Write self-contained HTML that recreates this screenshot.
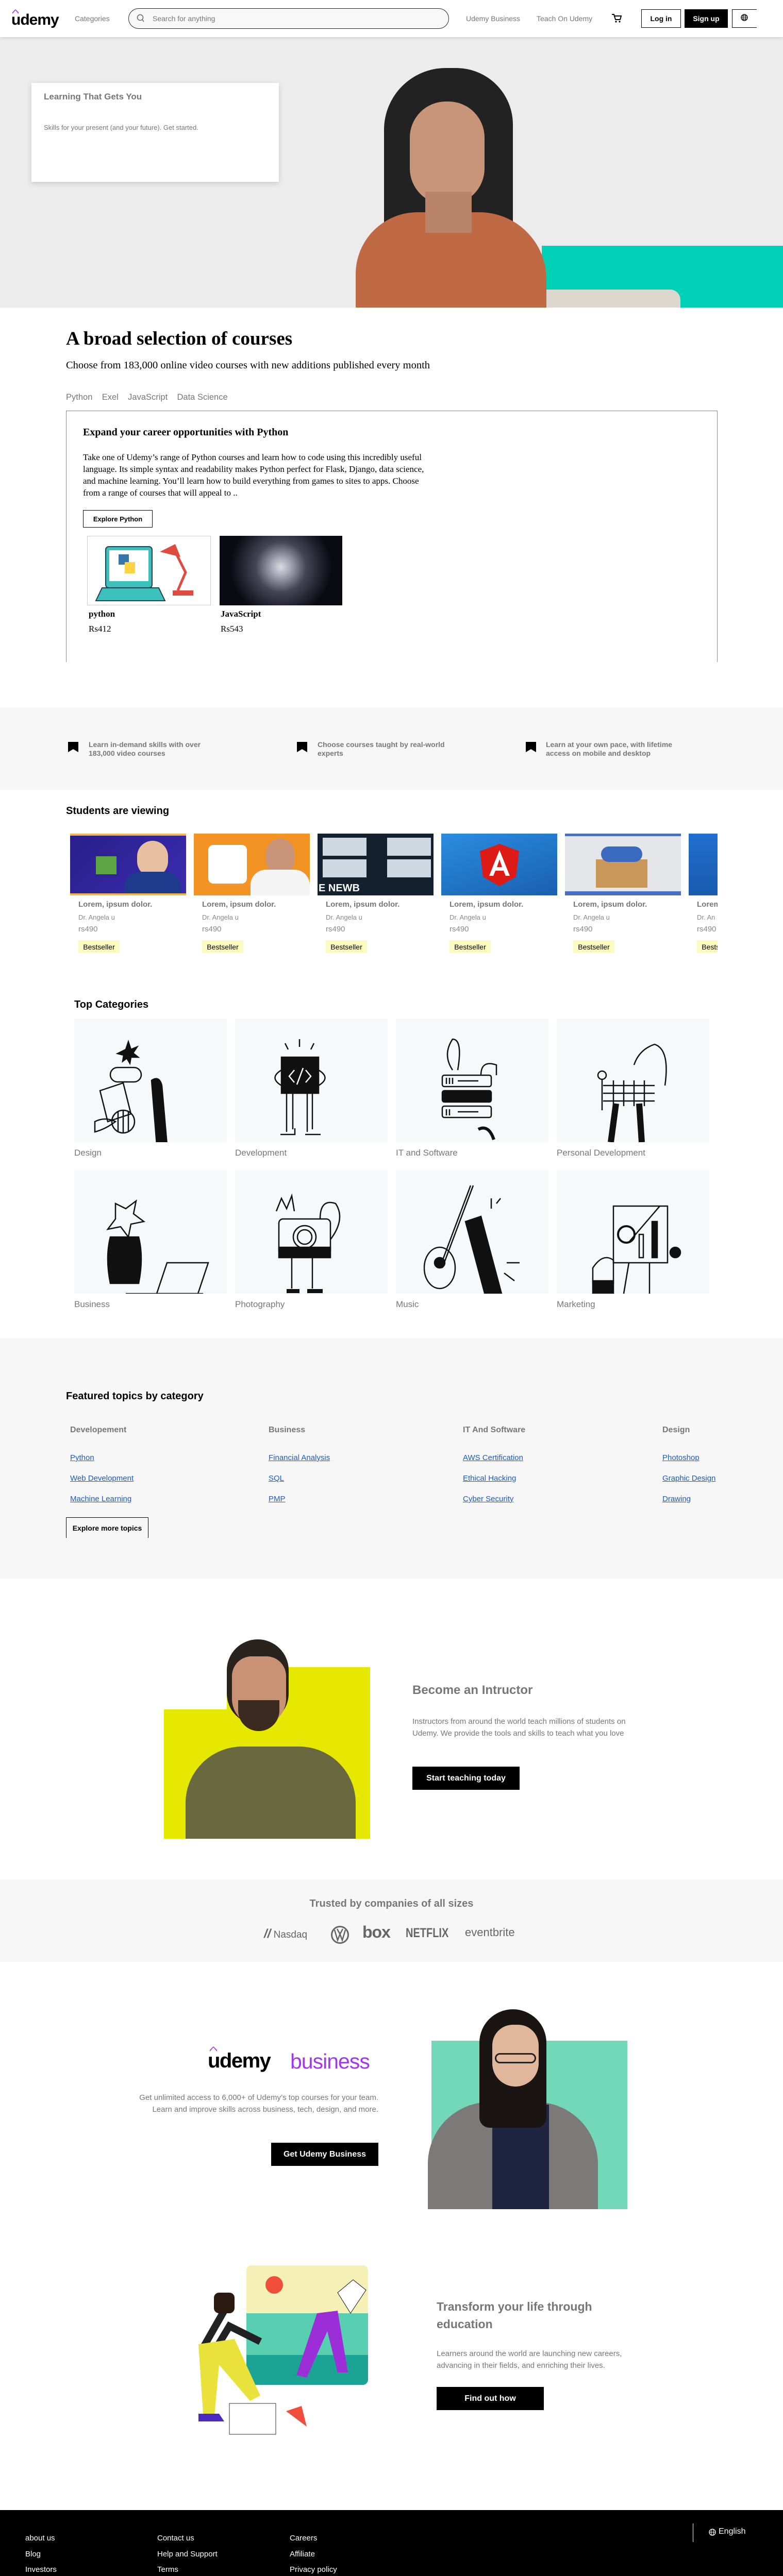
<!DOCTYPE html>
<html style="overflow:hidden;height:5134px"><head><meta charset="utf-8">
<style>
*{box-sizing:border-box;margin:0;padding:0}
html,body{width:1519px;height:5134px;overflow:hidden}
body{position:relative;font-family:"Liberation Sans",sans-serif;background:#fff;color:#000}
.a{position:absolute}
.serif{font-family:"Liberation Serif",serif}
.gray{color:#777}
.lnk{color:#1a5ac9;text-decoration:underline;font-size:15px}
.btn{position:absolute;background:#000;color:#fff;font-weight:bold;font-size:16px;display:flex;align-items:center;justify-content:center}
.tile{position:absolute;background:#f7f8fa;width:296px;height:240px}
.lbl{position:absolute;font-size:17px;color:#777}
.ci{position:absolute;width:225px;height:120px;top:1618px;overflow:hidden}
.ct{position:absolute;font-size:15px;font-weight:bold;color:#777;top:1747px}
.ca{position:absolute;font-size:13px;color:#888;top:1773px}
.cp{position:absolute;font-size:15px;color:#888;top:1795px}
.cb{position:absolute;top:1825px;height:25px;width:80px;background:#fefbc0;font-size:14px;display:flex;align-items:center;justify-content:center}
.ft{position:absolute;color:#fff;font-size:15px}
</style></head><body>

<!-- NAV -->
<div class="a" style="left:0;top:0;width:1519px;height:72px;background:#fff;box-shadow:0 2px 6px rgba(0,0,0,.12);z-index:2">
  <div class="a" style="left:24px;top:14px;width:10px;height:8px"><svg width="12" height="9"><path d="M0 9 L6 2 L12 9 L12 6 L6 0 L0 6Z" fill="#a435f0"/></svg></div>
  <div class="a" style="left:22px;top:22px;font-size:30px;font-weight:bold;letter-spacing:-1px">udemy</div>
  <div class="a gray" style="left:145px;top:28px;font-size:14px">Categories</div>
  <div class="a" style="left:249px;top:16px;width:622px;height:40px;border:1px solid #222;border-radius:20px;background:#f8f8f8"></div>
  <svg class="a" style="left:265px;top:27px" width="16" height="18"><circle cx="7" cy="7" r="5.5" fill="none" stroke="#666" stroke-width="1.5"/><path d="M11 11 L14 15" stroke="#666" stroke-width="1.5"/></svg>
  <div class="a gray" style="left:296px;top:28px;font-size:14px">Search for anything</div>
  <div class="a gray" style="left:904px;top:28px;font-size:14px">Udemy Business</div>
  <div class="a gray" style="left:1041px;top:28px;font-size:14px">Teach On Udemy</div>
  <svg class="a" style="left:1186px;top:26px" width="22" height="20"><path d="M1 2 H5 L8 12 H17 L19 5 H6" fill="none" stroke="#000" stroke-width="2"/><circle cx="9" cy="16" r="1.6"/><circle cx="16" cy="16" r="1.6"/></svg>
  <div class="a" style="left:1244px;top:18px;width:77px;height:36px;border:1px solid #000;font-weight:bold;font-size:14px;display:flex;align-items:center;justify-content:center">Log in</div>
  <div class="a" style="left:1328px;top:18px;width:84px;height:36px;background:#000;color:#fff;font-weight:bold;font-size:14px;display:flex;align-items:center;justify-content:center">Sign up</div>
  <div class="a" style="left:1420px;top:18px;width:48px;height:36px;border:1px solid #000;border-right:none"></div>
  <svg class="a" style="left:1437px;top:27px" width="14" height="14"><circle cx="7" cy="7" r="6" fill="none" stroke="#000" stroke-width="1.3"/><ellipse cx="7" cy="7" rx="2.5" ry="6" fill="none" stroke="#000"/><path d="M1 7H13M2 4H12M2 10H12" stroke="#000"/></svg>
</div>

<!-- HERO -->
<div class="a" style="left:0;top:72px;width:1519px;height:525px;background:#ececec;overflow:hidden">
  <div class="a" style="left:1051px;top:405px;width:468px;height:120px;background:#00d1b6"></div>
  <div class="a" style="left:1020px;top:490px;width:300px;height:40px;background:#ddd8cf;border-radius:20px 20px 0 0"></div>
  <div class="a" style="left:745px;top:60px;width:250px;height:440px;background:#222;border-radius:120px 110px 40px 40px"></div>
  <div class="a" style="left:690px;top:340px;width:370px;height:260px;background:#c06a45;border-radius:120px 130px 0 0"></div>
  <div class="a" style="left:795px;top:125px;width:145px;height:200px;background:#c99579;border-radius:70px"></div>
  <div class="a" style="left:825px;top:300px;width:90px;height:80px;background:#b9836a"></div>
  <div class="a" style="left:61px;top:89px;width:480px;height:192px;background:#fff;box-shadow:0 3px 10px rgba(0,0,0,.15)"></div>
  <div class="a" style="left:85px;top:106px;font-size:17px;font-weight:bold;color:#777">Learning That Gets You</div>
  <div class="a" style="left:85px;top:168px;font-size:13px;color:#777">Skills for your present (and your future). Get started.</div>
</div>

<!-- BROAD -->
<div class="a serif" style="left:128px;top:636px;font-size:37px;font-weight:bold">A broad selection of courses</div>
<div class="a serif" style="left:128px;top:698px;font-size:20.5px">Choose from 183,000 online video courses with new additions published every month</div>
<div class="a gray" style="left:128px;top:762px;font-size:16.5px">Python&nbsp;&nbsp;&nbsp;&nbsp;Exel&nbsp;&nbsp;&nbsp;&nbsp;JavaScript&nbsp;&nbsp;&nbsp;&nbsp;Data Science</div>
<div class="a" style="left:128px;top:797px;width:1264px;height:488px;border:1px solid #888;border-bottom:none"></div>
<div class="a serif" style="left:161px;top:828px;font-size:20px;font-weight:bold">Expand your career opportunities with Python</div>
<div class="a serif" style="left:161px;top:876px;width:680px;font-size:17px;line-height:23px">Take one of Udemy’s range of Python courses and learn how to code using this incredibly useful language. Its simple syntax and readability makes Python perfect for Flask, Django, data science, and machine learning. You’ll learn how to build everything from games to sites to apps. Choose from a range of courses that will appeal to ..</div>
<div class="a" style="left:161px;top:990px;width:135px;height:34px;border:1px solid #000;font-size:13px;font-weight:bold;display:flex;align-items:center;justify-content:center">Explore Python</div>
<div class="a" style="left:169px;top:1040px;width:240px;height:135px;border:1px solid #ccc;background:#fff">
  <svg width="238" height="133"><rect x="35" y="20" width="90" height="80" rx="6" fill="#3cc0bb" stroke="#2c3e50" stroke-width="2"/><rect x="42" y="27" width="76" height="60" fill="#fff"/><path d="M60 35h20v20h-20z" fill="#3776ab"/><path d="M72 50h20v22h-20z" fill="#ffd343"/><path d="M28 100 h110 l12 25 h-134z" fill="#3cc0bb" stroke="#2c3e50" stroke-width="2"/><path d="M140 30 l30 -15 l10 25 z" fill="#e04b3f"/><path d="M170 30 l20 40 l-15 35" stroke="#e04b3f" stroke-width="5" fill="none"/><rect x="165" y="105" width="40" height="10" fill="#e04b3f"/></svg>
</div>
<div class="a" style="left:426px;top:1040px;width:238px;height:135px;background:radial-gradient(circle at 50% 45%,#ddd 0,#aab 12%,#445 35%,#0a0a12 70%)"></div>
<div class="a serif" style="left:172px;top:1182px;font-size:17px;font-weight:bold">python</div>
<div class="a serif" style="left:172px;top:1211px;font-size:17px">Rs412</div>
<div class="a serif" style="left:428px;top:1182px;font-size:17px;font-weight:bold">JavaScript</div>
<div class="a serif" style="left:428px;top:1211px;font-size:17px">Rs543</div>

<!-- FEATURES -->
<div class="a" style="left:0;top:1373px;width:1519px;height:160px;background:#f7f7f7"></div>
<svg class="a" style="left:132px;top:1440px" width="20" height="20"><path d="M0 0H20V20L10 14L0 20Z"/></svg>
<svg class="a" style="left:576px;top:1440px" width="20" height="20"><path d="M0 0H20V20L10 14L0 20Z"/></svg>
<svg class="a" style="left:1020px;top:1440px" width="20" height="20"><path d="M0 0H20V20L10 14L0 20Z"/></svg>
<div class="a" style="left:172px;top:1437px;font-size:14px;font-weight:bold;color:#777;line-height:17px">Learn in-demand skills with over<br>183,000 video courses</div>
<div class="a" style="left:616px;top:1437px;font-size:14px;font-weight:bold;color:#777;line-height:17px">Choose courses taught by real-world<br>experts</div>
<div class="a" style="left:1059px;top:1437px;font-size:14px;font-weight:bold;color:#777;line-height:17px">Learn at your own pace, with lifetime<br>access on mobile and desktop</div>

<!-- STUDENTS -->
<div class="a" style="left:128px;top:1563px;font-size:20px;font-weight:bold">Students are viewing</div>
<div class="ci" style="left:136px;background:linear-gradient(135deg,#2a1e8a,#3b2bb0);border-top:4px solid #f0b84a;border-bottom:4px solid #f0b84a"><div class="a" style="left:130px;top:10px;width:60px;height:70px;border-radius:30px;background:#e8c0a0"></div><div class="a" style="left:105px;top:70px;width:110px;height:50px;background:#1f3a8a;border-radius:30px 30px 0 0"></div><div class="a" style="left:50px;top:40px;width:40px;height:35px;background:#5da545"></div></div>
<div class="ci" style="left:376px;background:#f39323"><div class="a" style="left:28px;top:22px;width:75px;height:75px;background:#fff;border-radius:10px"></div><div class="a" style="left:140px;top:10px;width:55px;height:70px;border-radius:28px;background:#c99478"></div><div class="a" style="left:110px;top:70px;width:115px;height:55px;background:#f4f4f4;border-radius:30px 30px 0 0"></div></div>
<div class="ci" style="left:616px;background:#13202e"><div class="a" style="left:10px;top:8px;width:85px;height:35px;background:#cfd8e0"></div><div class="a" style="left:135px;top:8px;width:85px;height:35px;background:#cfd8e0"></div><div class="a" style="left:10px;top:50px;width:85px;height:35px;background:#cfd8e0"></div><div class="a" style="left:135px;top:50px;width:85px;height:35px;background:#cfd8e0"></div><div class="a" style="left:2px;top:95px;color:#fff;font-weight:bold;font-size:20px">E NEWB</div></div>
<div class="ci" style="left:856px;background:linear-gradient(160deg,#2a8de0,#1a5fb0)"><svg class="a" style="left:75px;top:20px" width="76" height="82"><path d="M38 0L76 14L70 64L38 82L6 64L0 14Z" fill="#dd1b16"/><path d="M38 12L18 62H26L30 52H46L50 62H58ZM33 45L38 30L43 45Z" fill="#fff"/></svg></div>
<div class="ci" style="left:1096px;background:#e4e6ea;border-bottom:8px solid #4a6fc0;border-top:5px solid #4a6fc0"><div class="a" style="left:60px;top:45px;width:100px;height:55px;background:#c9975a"></div><div class="a" style="left:70px;top:20px;width:80px;height:30px;background:#3a6ac0;border-radius:15px"></div></div>
<div class="ci" style="left:1336px;width:56px;background:linear-gradient(#1f6fd0,#1a5ab0)"></div>
<div class="ct" style="left:152px">Lorem, ipsum dolor.</div><div class="ca" style="left:152px">Dr. Angela u</div><div class="cp" style="left:152px">rs490</div><div class="cb" style="left:152px">Bestseller</div>
<div class="ct" style="left:392px">Lorem, ipsum dolor.</div><div class="ca" style="left:392px">Dr. Angela u</div><div class="cp" style="left:392px">rs490</div><div class="cb" style="left:392px">Bestseller</div>
<div class="ct" style="left:632px">Lorem, ipsum dolor.</div><div class="ca" style="left:632px">Dr. Angela u</div><div class="cp" style="left:632px">rs490</div><div class="cb" style="left:632px">Bestseller</div>
<div class="ct" style="left:872px">Lorem, ipsum dolor.</div><div class="ca" style="left:872px">Dr. Angela u</div><div class="cp" style="left:872px">rs490</div><div class="cb" style="left:872px">Bestseller</div>
<div class="ct" style="left:1112px">Lorem, ipsum dolor.</div><div class="ca" style="left:1112px">Dr. Angela u</div><div class="cp" style="left:1112px">rs490</div><div class="cb" style="left:1112px">Bestseller</div>
<div class="a" style="left:1352px;top:1740px;width:40px;height:120px;overflow:hidden"><div class="ct" style="left:0;top:7px;white-space:nowrap">Lorem</div><div class="ca" style="left:0;top:33px;white-space:nowrap">Dr. An</div><div class="cp" style="left:0;top:55px">rs490</div><div class="cb" style="left:0;top:85px">Bestseller</div></div>

<!-- TOP CATEGORIES -->
<div class="a" style="left:144px;top:1939px;font-size:20px;font-weight:bold">Top Categories</div>
<div class="tile" style="left:144px;top:1977px"><svg width="296" height="240" fill="none" stroke="#111" stroke-width="2.5"><path d="M100 60 l5 -15 l5 15 l12 -5 l-8 12 l10 8 l-14 0 l-2 12 l-6 -10 l-8 6 l2 -12 l-12 -3z" fill="#111"/><rect x="70" y="95" width="60" height="28" rx="14"/><path d="M50 140 L95 125 L110 185 L65 200Z"/><circle cx="95" cy="200" r="22"/><path d="M85 180v40M95 178v44M105 180v40"/><path d="M150 120 q15 -10 20 10 l10 115 h-20 z" fill="#111"/><path d="M40 200 q20 -10 40 0 q-20 15 -40 20z"/></svg></div>
<div class="tile" style="left:456px;top:1977px"><svg width="296" height="240" fill="none" stroke="#111" stroke-width="2.5"><path d="M103 60l-6-12M125 55v-15M147 60l6-12"/><rect x="90" y="75" width="72" height="70" fill="#111"/><path d="M115 100l-10 12l10 12M137 100l10 12l-10 12M132 96l-12 32" stroke="#fff"/><path d="M90 100q-25 15 0 30M162 100q25 15 0 30"/><path d="M100 145v75M112 145v70M140 145v75M150 145v70"/><path d="M88 225h28v-12M136 225h30"/></svg></div>
<div class="tile" style="left:768px;top:1977px"><svg width="296" height="240" fill="none" stroke="#111" stroke-width="2.5"><rect x="90" y="110" width="95" height="22" rx="4"/><rect x="90" y="140" width="95" height="22" rx="4" fill="#111"/><rect x="90" y="170" width="95" height="22" rx="4"/><path d="M98 115v12M104 115v12M110 115v12M120 121h40M98 176v12M104 176v12M120 181h40"/><path d="M110 100q-20 -30 0 -60q20 0 10 60"/><path d="M160 215q20 -10 30 20" stroke-width="6"/><path d="M165 110q0 -30 30 -20v20"/></svg></div>
<div class="tile" style="left:1080px;top:1977px"><svg width="296" height="240" fill="none" stroke="#111" stroke-width="2.5"><path d="M90 130h100M90 145h100M90 160h100M110 120v50M130 120v50M150 120v50M170 120v50"/><path d="M115 165l-10 75M160 165l5 75" stroke-width="12"/><circle cx="88" cy="110" r="8"/><path d="M88 118v60"/><path d="M150 90q10 -30 40 -40q30 10 20 80"/></svg></div>
<div class="lbl" style="left:144px;top:2228px">Design</div>
<div class="lbl" style="left:456px;top:2228px">Development</div>
<div class="lbl" style="left:768px;top:2228px">IT and Software</div>
<div class="lbl" style="left:1080px;top:2228px">Personal Development</div>
<div class="tile" style="left:144px;top:2271px"><svg width="296" height="240" fill="none" stroke="#111" stroke-width="2.5"><path d="M80 65l20 10l20-15l-5 25l20 15l-25 5l-5 25l-15-20l-25 5l15-20z"/><path d="M70 130q-10 40 0 90h55q10-50 0-90z" fill="#111"/><path d="M180 180h80l-20 60h-80z"/><path d="M100 240h150"/></svg></div>
<div class="tile" style="left:456px;top:2271px"><svg width="296" height="240" fill="none" stroke="#111" stroke-width="2.5"><path d="M80 80l10-25l10 20l10-25l5 30"/><rect x="85" y="95" width="100" height="70" rx="8"/><circle cx="135" cy="130" r="22"/><circle cx="135" cy="130" r="14"/><path d="M85 150h100v20h-100z" fill="#111"/><path d="M110 170v60M150 170v60"/><path d="M100 235h25M140 235h30" stroke-width="8"/><path d="M165 95q0-40 30-30q20 30-10 70"/></svg></div>
<div class="tile" style="left:768px;top:2271px"><svg width="296" height="240" fill="none" stroke="#111" stroke-width="2.5"><ellipse cx="85" cy="190" rx="30" ry="40"/><circle cx="85" cy="180" r="10" fill="#111"/><path d="M85 190l60-160M90 190l60-160"/><path d="M135 100l30-10l40 150l-30 10z" fill="#111"/><path d="M185 55v20M195 65l8-10M210 200l20 15M215 180h25"/></svg></div>
<div class="tile" style="left:1080px;top:2271px"><svg width="296" height="240" fill="none" stroke="#111" stroke-width="2.5"><rect x="110" y="70" width="105" height="110"/><path d="M180 180v60M140 180l-10 60"/><path d="M140 140l60-70" /><rect x="185" y="100" width="10" height="70" fill="#111"/><rect x="160" y="125" width="8" height="45"/><circle cx="135" cy="125" r="16" stroke-width="4"/><path d="M70 190q20-30 40-15v45h-40z"/><rect x="70" y="215" width="40" height="25" fill="#111"/><circle cx="230" cy="160" r="10" fill="#111"/></svg></div>
<div class="lbl" style="left:144px;top:2522px">Business</div>
<div class="lbl" style="left:456px;top:2522px">Photography</div>
<div class="lbl" style="left:768px;top:2522px">Music</div>
<div class="lbl" style="left:1080px;top:2522px">Marketing</div>

<!-- FEATURED -->
<div class="a" style="left:0;top:2597px;width:1519px;height:467px;background:#f7f7f7"></div>
<div class="a" style="left:128px;top:2699px;font-size:20px;font-weight:bold">Featured topics by category</div>
<div class="a gray" style="left:136px;top:2767px;font-size:16px;font-weight:bold">Developement</div>
<div class="a gray" style="left:521px;top:2767px;font-size:16px;font-weight:bold">Business</div>
<div class="a gray" style="left:898px;top:2767px;font-size:16px;font-weight:bold">IT And Software</div>
<div class="a gray" style="left:1285px;top:2767px;font-size:16px;font-weight:bold">Design</div>
<div class="a lnk" style="left:136px;top:2821px">Python</div>
<div class="a lnk" style="left:136px;top:2861px">Web Development</div>
<div class="a lnk" style="left:136px;top:2901px">Machine Learning</div>
<div class="a lnk" style="left:521px;top:2821px">Financial Analysis</div>
<div class="a lnk" style="left:521px;top:2861px">SQL</div>
<div class="a lnk" style="left:521px;top:2901px">PMP</div>
<div class="a lnk" style="left:898px;top:2821px">AWS Certification</div>
<div class="a lnk" style="left:898px;top:2861px">Ethical Hacking</div>
<div class="a lnk" style="left:898px;top:2901px">Cyber Security</div>
<div class="a lnk" style="left:1285px;top:2821px">Photoshop</div>
<div class="a lnk" style="left:1285px;top:2861px">Graphic Design</div>
<div class="a lnk" style="left:1285px;top:2901px">Drawing</div>
<div class="a" style="left:128px;top:2945px;width:160px;height:40px;border:1px solid #000;border-bottom:none;font-size:14px;font-weight:bold;display:flex;align-items:center;justify-content:center">Explore more topics</div>

<!-- INSTRUCTOR -->
<div class="a" style="left:318px;top:3318px;width:150px;height:251px;background:#e6e800"></div>
<div class="a" style="left:440px;top:3236px;width:278px;height:333px;background:#e6e800"></div>
<div class="a" style="left:360px;top:3390px;width:330px;height:179px;background:#68693e;border-radius:110px 110px 0 0"></div>
<div class="a" style="left:440px;top:3182px;width:120px;height:165px;background:#2a221d;border-radius:60px"></div>
<div class="a" style="left:450px;top:3215px;width:105px;height:135px;background:#c99275;border-radius:40px 40px 55px 55px"></div>
<div class="a" style="left:462px;top:3300px;width:80px;height:60px;background:#3a2a20;border-radius:0 0 40px 40px"></div>
<div class="a" style="left:800px;top:3267px;font-size:24px;font-weight:bold;color:#777">Become an Intructor</div>
<div class="a" style="left:800px;top:3330px;width:450px;font-size:15px;line-height:23px;color:#777">Instructors from around the world teach millions of students on Udemy. We provide the tools and skills to teach what you love</div>
<div class="btn" style="left:800px;top:3429px;width:208px;height:45px">Start teaching today</div>

<!-- TRUSTED -->
<div class="a" style="left:0;top:3648px;width:1519px;height:160px;background:#f7f7f7"></div>
<div class="a" style="left:0;top:3684px;width:1519px;text-align:center;font-size:20px;font-weight:bold;color:#777">Trusted by companies of all sizes</div>
<div class="a" style="left:512px;top:3740px;font-size:19px;color:#666"><b style="font-size:24px;font-style:italic">//</b> Nasdaq</div>
<svg class="a" style="left:641px;top:3737px" width="37" height="37"><circle cx="18.5" cy="18.5" r="16" fill="none" stroke="#666" stroke-width="3"/><path d="M8 9l6 20l4.5-12l4.5 12l6-20M13 7l5.5 10l5.5-10" fill="none" stroke="#666" stroke-width="2.5"/></svg>
<div class="a" style="left:703px;top:3732px;font-size:32px;font-weight:bold;color:#666;letter-spacing:-1px">box</div>
<div class="a" style="left:787px;top:3738px;font-size:25px;font-weight:bold;color:#666;transform:scaleX(.8);transform-origin:left">NETFLIX</div>
<div class="a" style="left:902px;top:3738px;font-size:22px;color:#666">eventbrite</div>

<!-- BUSINESS -->
<svg class="a" style="left:407px;top:3972px" width="14" height="10"><path d="M0 10 L7 2 L14 10 L14 7 L7 0 L0 7Z" fill="#a435f0"/></svg>
<div class="a" style="left:403px;top:3978px;font-size:40px;font-weight:bold;letter-spacing:-1.5px">udemy</div>
<div class="a" style="left:563px;top:3978px;font-size:41px;color:#a435f0;letter-spacing:-1px">business</div>
<div class="a" style="left:264px;top:4061px;width:470px;text-align:right;font-size:15px;line-height:22.5px;color:#777">Get unlimited access to 6,000+ of Udemy’s top courses for your team. Learn and improve skills across business, tech, design, and more.</div>
<div class="btn" style="left:526px;top:4159px;width:208px;height:45px">Get Udemy Business</div>
<div class="a" style="left:837px;top:3961px;width:380px;height:327px;background:#72d8b8"></div>
<div class="a" style="left:830px;top:4080px;width:330px;height:208px;background:#7c7a78;border-radius:120px 120px 0 0"></div>
<div class="a" style="left:955px;top:4085px;width:110px;height:203px;background:#1f2540"></div>
<div class="a" style="left:930px;top:3900px;width:130px;height:230px;background:#1a1513;border-radius:65px 65px 20px 20px"></div>
<div class="a" style="left:955px;top:3930px;width:90px;height:120px;background:#e0b79b;border-radius:40px 40px 45px 45px"></div>
<div class="a" style="left:960px;top:3985px;width:80px;height:20px;border:3px solid #222;border-radius:10px"></div>
<!-- transform illustration -->
<div class="a" style="left:478px;top:4397px;width:236px;height:232px;border-radius:10px;background:linear-gradient(#f5f0b5 0,#f5f0b5 40%,#58cfb0 40%,#58cfb0 75%,#1ba393 75%)"></div>
<div class="a" style="left:515px;top:4418px;width:34px;height:34px;border-radius:50%;background:#f04e3a"></div>
<svg class="a" style="left:315px;top:4390px" width="420" height="350"><path d="M340 60 l30 -25 l25 20 l-30 45z" fill="#fff" stroke="#111"/><path d="M300 100 l-40 120 l20 5 l40 -90 l20 80 l20 0 l-20 -120z" fill="#9b2ed6"/><path d="M120 95 l-40 70 l20 10 l30 -50 l60 30" fill="none" stroke="#222" stroke-width="14"/><path d="M70 160 l10 150 l20 0 l10 -110 l60 70 l20 -10 l-50 -110z" fill="#e8e23a"/><path d="M70 310 h50 l-10 -15 h-40z" fill="#4a2ac0"/><rect x="130" y="275" width="90" height="60" fill="#fff" stroke="#333"/><rect x="100" y="60" width="40" height="40" rx="10" fill="#2a1a10"/><path d="M240 290 l30 -10 l10 40z" fill="#f04e3a"/></svg>
<div class="a" style="left:847px;top:4460px;font-size:23px;font-weight:bold;color:#777;line-height:34px">Transform your life through<br>education</div>
<div class="a" style="left:847px;top:4558px;font-size:15px;line-height:22.5px;color:#777">Learners around the world are launching new careers,<br>advancing in their fields, and enriching their lives.</div>
<div class="btn" style="left:847px;top:4633px;width:208px;height:45px">Find out how</div>

<!-- FOOTER -->
<div class="a" style="left:0;top:4872px;width:1519px;height:262px;background:#000"></div>
<div class="ft" style="left:49px;top:4918px">about us</div>
<div class="ft" style="left:49px;top:4949px">Blog</div>
<div class="ft" style="left:49px;top:4979px">Investors</div>
<div class="ft" style="left:49px;top:5010px">Cookie settings</div>
<div class="ft" style="left:305px;top:4918px">Contact us</div>
<div class="ft" style="left:305px;top:4949px">Help and Support</div>
<div class="ft" style="left:305px;top:4979px">Terms</div>
<div class="ft" style="left:305px;top:5010px">Accesibility statement</div>
<div class="ft" style="left:562px;top:4918px">Careers</div>
<div class="ft" style="left:562px;top:4949px">Affiliate</div>
<div class="ft" style="left:562px;top:4979px">Privacy policy</div>
<div class="a" style="left:1344px;top:4898px;width:1px;height:36px;background:#fff"></div>
<svg class="a" style="left:1375px;top:4908px" width="14" height="14"><circle cx="7" cy="7" r="6" fill="none" stroke="#fff" stroke-width="1.3"/><ellipse cx="7" cy="7" rx="2.5" ry="6" fill="none" stroke="#fff"/><path d="M1 7H13" stroke="#fff"/></svg>
<div class="ft" style="left:1394px;top:4905px;font-size:16px">English</div>
<svg class="a" style="left:50px;top:5080px" width="12" height="9"><path d="M0 9 L6 2 L12 9 L12 6 L6 0 L0 6Z" fill="#5ac92b"/></svg>
<div class="a" style="left:48px;top:5084px;font-size:28px;font-weight:bold;color:#fff;letter-spacing:-1px;line-height:32px">udemy</div>
<div class="ft" style="left:1343px;top:5091px;font-size:13px">© 2021 Udemy, Inc.</div>
</body></html>
